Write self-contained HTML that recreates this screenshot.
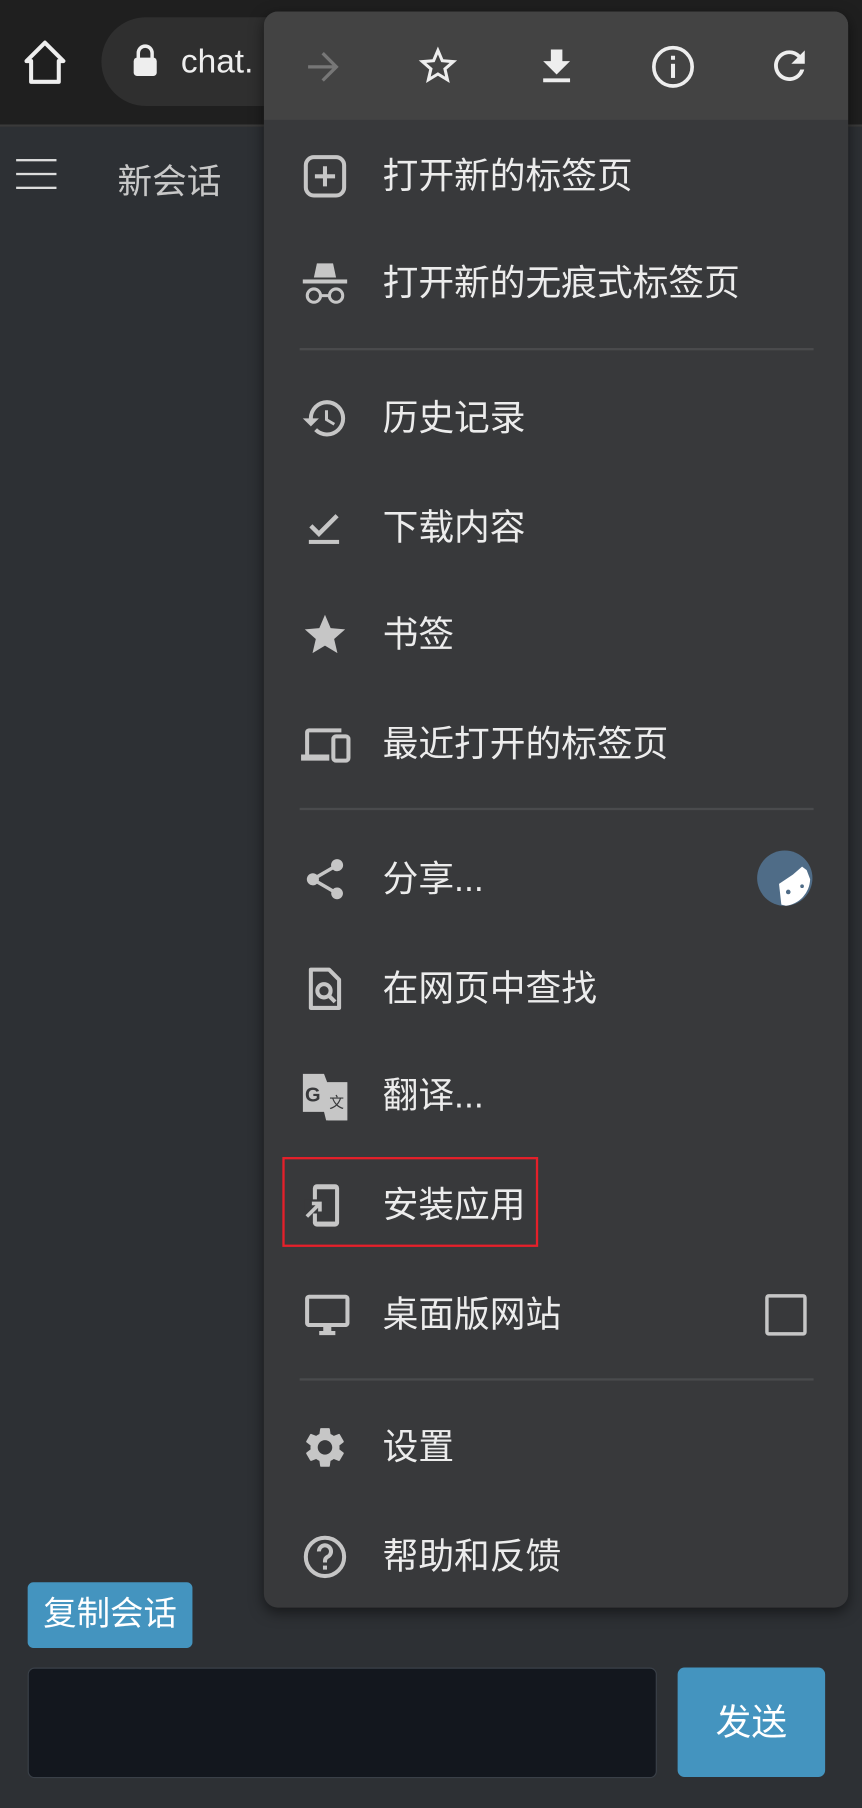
<!DOCTYPE html>
<html><head><meta charset="utf-8">
<style>
html,body{margin:0;padding:0;background:#2d3034;overflow:hidden}
body{width:862px;height:1808px;position:relative}
#w{position:absolute;left:0;top:0;width:748px;height:1569px;transform:scale(1.15241);transform-origin:0 0;font-family:"Liberation Sans","Noto Sans CJK SC",sans-serif;}
.abs{position:absolute}
.top{left:0;top:0;width:748px;height:108px;background:#1f1f1f;border-bottom:2px solid #3a3a3a}
.pill{left:88px;top:15px;width:300px;height:77px;border-radius:39px;background:#2f2f2f}
.menu{left:229px;top:10px;width:507px;height:1385px;background:#38393b;border-radius:12px;box-shadow:0 4px 12px rgba(0,0,0,.5);overflow:hidden}
.bar{left:0;top:0;width:507px;height:94px;background:#434343}
.item{position:absolute;left:0;width:507px;height:60px}
.item svg{position:absolute;left:32px;top:10px}
.item span{position:absolute;left:103px;top:11px;font-size:31px;color:#ececec;line-height:40px;white-space:nowrap}
.div{position:absolute;left:31px;width:446px;height:2px;background:#4a4b4d}
.ic{fill:#c6c6c6}
</style></head><body><div id="w">
<div class="abs top"></div>
<svg class="abs" style="left:20px;top:34px" width="38" height="40" viewBox="0 0 38 40"><path d="M19 3 L35 19 L31 19 L31 37 L7 37 L7 19 L3 19 Z" fill="none" stroke="#eee" stroke-width="3.5" stroke-linejoin="round"/></svg>
<div class="abs pill"></div>
<svg class="abs" style="left:114px;top:38px" width="24" height="30" viewBox="0 0 24 30"><path d="M6 13 V8 a6 6 0 0 1 12 0 V13" fill="none" stroke="#eee" stroke-width="3"/><rect x="2" y="12" width="20" height="16" rx="3" fill="#eee"/></svg>
<div class="abs" style="left:157px;top:38px;font-size:29px;color:#eee">chat.</div>
<div class="abs" style="left:14px;top:138px;width:35px;height:2px;background:#ddd;box-shadow:0 12px 0 #ddd,0 24px 0 #ddd"></div>
<div class="abs" style="left:102px;top:133px;font-size:30px;color:#c8c8c8">新会话</div>

<div class="abs menu">
<div class="abs bar"></div>
<svg class="abs" style="left:32px;top:29px" width="38" height="38" viewBox="0 0 24 24"><path d="M4 12h15M12 4.5l7.5 7.5-7.5 7.5" fill="none" stroke="#777" stroke-width="1.8"/></svg>
<svg class="abs" style="left:131px;top:27px" width="40" height="40" viewBox="0 0 24 24"><path d="M22 9.24l-7.19-.62L12 2 9.19 8.63 2 9.24l5.46 4.73L5.82 21 12 17.27 18.18 21l-1.63-7.03L22 9.24zM12 15.4l-3.76 2.27 1-4.28-3.32-2.88 4.38-.38L12 6.1l1.71 4.04 4.38.38-3.32 2.88 1 4.28L12 15.4z" fill="#eee"/></svg>
<svg class="abs" style="left:234px;top:28px" width="40" height="40" viewBox="0 0 24 24"><path d="M19 9h-4V3H9v6H5l7 7 7-7zM5 18v2h14v-2H5z" fill="#eee"/></svg>
<svg class="abs" style="left:334px;top:27px" width="42" height="42" viewBox="0 0 24 24"><circle cx="12" cy="12" r="9.5" fill="none" stroke="#eee" stroke-width="1.8"/><rect x="11" y="10.5" width="2" height="7" fill="#eee"/><rect x="11" y="6.5" width="2" height="2" fill="#eee"/></svg>
<svg class="abs" style="left:436px;top:27px" width="40" height="40" viewBox="0 0 24 24"><path d="M17.65 6.350A7.958 7.958 0 0 0 12 4c-4.42 0-7.99 3.58-7.99 8s3.57 8 7.990 8c3.73 0 6.84-2.55 7.73-6h-2.08A5.990 5.990 0 0 1 12 18c-3.31 0-6-2.69-6-6s2.69-6 6-6c1.66 0 3.14.69 4.22 1.78L13 11h7V4l-2.35 2.35z" fill="#eee"/></svg>

<div class="item" style="top:112px"><svg width="42" height="42" viewBox="0 0 24 24"><rect x="2.5" y="2.5" width="19" height="19" rx="4" fill="none" stroke="#c6c6c6" stroke-width="2"/><path d="M12 7v10M7 12h10" stroke="#c6c6c6" stroke-width="2"/></svg><span>打开新的标签页</span></div>
<div class="item" style="top:205px"><svg width="42" height="42" viewBox="0 0 24 24"><path class="ic" d="M8 2h8l1.5 7h-11z"/><rect class="ic" x="1" y="10" width="22" height="2"/><circle cx="6.5" cy="18" r="3.3" fill="none" stroke="#c6c6c6" stroke-width="1.5"/><circle cx="17.5" cy="18" r="3.3" fill="none" stroke="#c6c6c6" stroke-width="1.5"/><path d="M9.8 18h4.4" stroke="#c6c6c6" stroke-width="1.5"/></svg><span>打开新的无痕式标签页</span></div>
<div class="div" style="top:292px"></div>
<div class="item" style="top:322px"><svg width="42" height="42" viewBox="0 0 24 24"><path class="ic" d="M13 3a9 9 0 0 0-9 9H1l3.89 3.89.07.14L9 12H6c0-3.87 3.13-7 7-7s7 3.13 7 7-3.13 7-7 7c-1.93 0-3.680-.79-4.940-2.06l-1.42 1.42A8.954 8.954 0 0 0 13 21a9 9 0 0 0 0-18zm-1 5v5l4.28 2.54.72-1.21-3.5-2.08V8H12z"/></svg><span>历史记录</span></div>
<div class="item" style="top:417px"><svg width="42" height="42" viewBox="0 0 24 24"><path d="M5 11l4 4 9-9" fill="none" stroke="#c6c6c6" stroke-width="2.2"/><rect class="ic" x="4" y="18" width="15" height="2"/></svg><span>下载内容</span></div>
<div class="item" style="top:510px"><svg width="42" height="42" viewBox="0 0 24 24"><path class="ic" d="M12 17.27L18.18 21l-1.64-7.03L22 9.24l-7.19-.61L12 2 9.19 8.63 2 9.24l5.46 4.73L5.82 21z"/></svg><span>书签</span></div>
<div class="item" style="top:605px"><svg width="46" height="42" viewBox="0 0 26 24"><path class="ic" d="M4 6h16V4H4c-1.1 0-2 .9-2 2v11H0v3h14v-3H4V6z"/><rect x="16" y="8" width="7.5" height="12" rx="1.3" fill="none" stroke="#c6c6c6" stroke-width="2"/></svg><span>最近打开的标签页</span></div>
<div class="div" style="top:691px"></div>
<div class="item" style="top:722px"><svg width="42" height="42" viewBox="0 0 24 24"><path class="ic" d="M18 16.08c-.76 0-1.44.3-1.96.77L8.91 12.7c.05-.23.09-.46.09-.7s-.04-.47-.09-.7l7.05-4.11c.54.5 1.25.81 2.04.81 1.66 0 3-1.34 3-3s-1.34-3-3-3-3 1.34-3 3c0 .24.04.47.09.7L8.04 9.81C7.5 9.31 6.79 9 6 9c-1.66 0-3 1.34-3 3s1.34 3 3 3c.79 0 1.5-.31 2.04-.81l7.12 4.16c-.05.21-.08.43-.08.65 0 1.61 1.31 2.92 2.92 2.920s2.92-1.31 2.92-2.92-1.31-2.92-2.92-2.92z"/></svg><span>分享...</span>
<svg style="position:absolute;left:427px;top:5px" width="50" height="50" viewBox="0 0 50 50"><circle cx="25" cy="25" r="24" fill="#4f6c87"/><path d="M22 48 L20 30 L32 22 L40 15 L44 18 L47 26 A24 24 0 0 1 26 49Z" fill="#fff"/><circle cx="28" cy="37" r="2" fill="#4f6c87"/><circle cx="40" cy="32" r="1.6" fill="#4f6c87"/></svg></div>
<div class="item" style="top:817px"><svg width="42" height="42" viewBox="0 0 24 24"><path d="M5 2.5h9l5 5V21.5H5z" fill="none" stroke="#c6c6c6" stroke-width="2" stroke-linejoin="round"/><circle cx="11.5" cy="13" r="3.3" fill="none" stroke="#c6c6c6" stroke-width="2"/><path d="M14 15.5l3 3" stroke="#c6c6c6" stroke-width="2"/></svg><span>在网页中查找</span></div>
<div class="item" style="top:910px"><svg width="44" height="44" viewBox="0 0 24 24"><path class="ic" d="M1 1h10l1.5 4H22v18H12l-1-4H1z"/><path d="M12.5 5.5H21.5V22.5H12.8" fill="none" stroke="#c6c6c6" stroke-width="1"/><text x="2" y="14" font-size="9.5" font-weight="bold" fill="#38393b" font-family="Liberation Sans">G</text><text x="13.5" y="17" font-size="7" fill="#38393b" font-family="Noto Sans CJK SC">文</text></svg><span>翻译...</span></div>
<div class="item" style="top:1005px"><svg width="42" height="42" viewBox="0 0 24 24"><rect x="6" y="1.5" width="13" height="21" rx="2" class="ic"/><rect x="8" y="4" width="9" height="16" fill="#38393b"/><rect x="2" y="9" width="7" height="7" fill="#38393b"/><path d="M3 17.5L9.5 11M5.5 11h4v4" fill="none" stroke="#c6c6c6" stroke-width="1.8"/></svg><span>安装应用</span></div>
<div class="item" style="top:1100px"><svg width="46" height="42" viewBox="0 0 24 24"><path class="ic" d="M21 2H3c-1.1 0-2 .9-2 2v12c0 1.1.9 2 2 2h7v2H8v2h8v-2h-2v-2h7c1.1 0 2-.9 2-2V4c0-1.1-.9-2-2-2zm0 14H3V4h18v12z"/></svg><span>桌面版网站</span>
<div style="position:absolute;left:435px;top:13px;width:30px;height:30px;border:3px solid #c6c6c6;border-radius:3px"></div></div>
<div class="div" style="top:1186px"></div>
<div class="item" style="top:1215px"><svg width="42" height="42" viewBox="0 0 24 24"><path class="ic" d="M19.14 12.94c.04-.3.06-.61.06-.94 0-.32-.02-.64-.07-.94l2.03-1.58a.49.49 0 0 0 .12-.61l-1.92-3.32a.488.488 0 0 0-.59-.22l-2.39.96c-.5-.38-1.03-.7-1.62-.94l-.36-2.54a.484.484 0 0 0-.48-.41h-3.84c-.24 0-.43.17-.47.41l-.36 2.54c-.59.24-1.13.57-1.62.94l-2.39-.96c-.22-.08-.47 0-.59.22L2.74 8.87c-.12.21-.08.47.12.61l2.03 1.58c-.05.3-.09.63-.09.94s.02.64.07.94l-2.03 1.58a.49.49 0 0 0-.12.61l1.92 3.32c.12.22.37.29.59.22l2.39-.96c.5.38 1.03.7 1.62.94l.36 2.54c.05.24.24.41.48.41h3.84c.24 0 .44-.17.47-.41l.36-2.54c.59-.24 1.13-.56 1.62-.94l2.39.96c.22.08.47 0 .59-.22l1.92-3.32c.12-.22.07-.47-.12-.61l-2.01-1.58zM12 15.6c-1.98 0-3.6-1.62-3.6-3.6s1.62-3.6 3.6-3.6 3.6 1.62 3.6 3.6-1.62 3.6-3.6 3.6z"/></svg><span>设置</span></div>
<div class="item" style="top:1310px"><svg width="42" height="42" viewBox="0 0 24 24"><circle cx="12" cy="12" r="9.5" fill="none" stroke="#c6c6c6" stroke-width="2"/><path d="M9 9.3a3 3 0 1 1 4.2 2.7c-.8.4-1.2 1-1.2 2v.8" fill="none" stroke="#c6c6c6" stroke-width="2"/><rect class="ic" x="11" y="16.3" width="2" height="2"/></svg><span>帮助和反馈</span></div>
</div>
<div class="abs" style="left:245px;top:1004px;width:218px;height:74px;border:2px solid #e5202a"></div>

<div class="abs" style="left:24px;top:1373px;width:143px;height:57px;background:#4494bf;border-radius:5px;color:#fff;font-size:29px;line-height:57px;text-align:center">复制会话</div>
<div class="abs" style="left:24px;top:1447px;width:544px;height:94px;background:#13171e;border:1px solid #3a4048;border-radius:6px"></div>
<div class="abs" style="left:588px;top:1447px;width:128px;height:95px;background:#4494bf;border-radius:6px;color:#fff;font-size:31px;line-height:95px;text-align:center">发送</div>
</div></body></html>
